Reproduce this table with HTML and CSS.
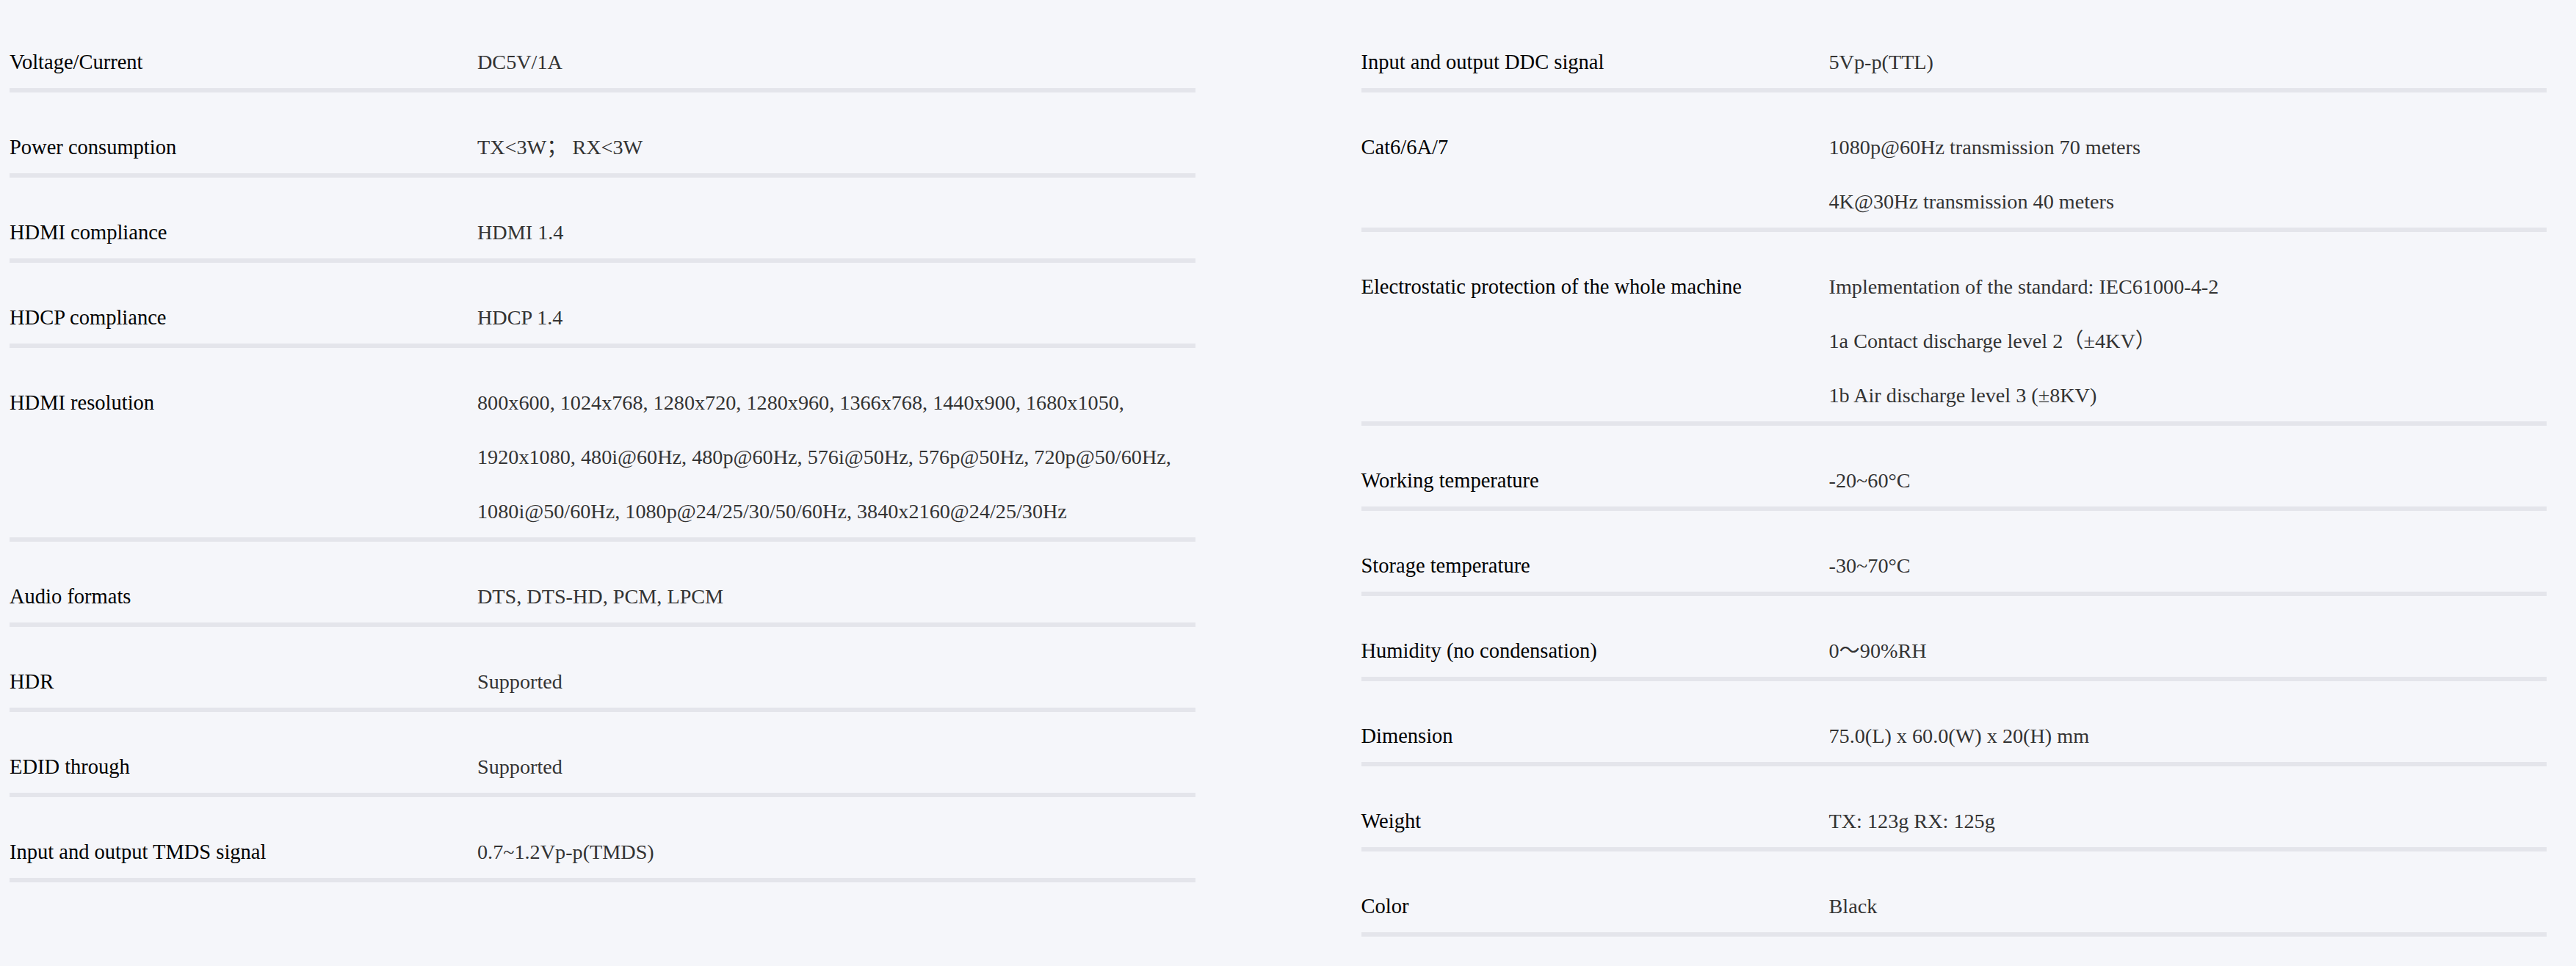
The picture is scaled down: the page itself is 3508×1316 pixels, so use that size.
FILE: index.html
```html
<!DOCTYPE html>
<html lang="en">
<head>
<meta charset="utf-8">
<title>Specifications</title>
<link rel="stylesheet" href="styles.css">
</head>
<body>
<main class="specs">
  <section class="col">
    <div class="row"><div class="label">Voltage/Current</div><div class="value"><p>DC5V/1A</p></div></div>
    <div class="row"><div class="label">Power consumption</div><div class="value"><p>TX&lt;3W；&nbsp;RX&lt;3W</p></div></div>
    <div class="row"><div class="label">HDMI compliance</div><div class="value"><p>HDMI 1.4</p></div></div>
    <div class="row"><div class="label">HDCP compliance</div><div class="value"><p>HDCP 1.4</p></div></div>
    <div class="row"><div class="label">HDMI resolution</div><div class="value">
      <p>800x600, 1024x768, 1280x720, 1280x960, 1366x768, 1440x900, 1680x1050,</p>
      <p>1920x1080, 480i@60Hz, 480p@60Hz, 576i@50Hz, 576p@50Hz, 720p@50/60Hz,</p>
      <p>1080i@50/60Hz, 1080p@24/25/30/50/60Hz, 3840x2160@24/25/30Hz</p>
    </div></div>
    <div class="row"><div class="label">Audio formats</div><div class="value"><p>DTS, DTS-HD, PCM, LPCM</p></div></div>
    <div class="row"><div class="label">HDR</div><div class="value"><p>Supported</p></div></div>
    <div class="row"><div class="label">EDID through</div><div class="value"><p>Supported</p></div></div>
    <div class="row"><div class="label">Input and output TMDS signal</div><div class="value"><p>0.7~1.2Vp-p(TMDS)</p></div></div>
  </section>
  <section class="col">
    <div class="row"><div class="label">Input and output DDC signal</div><div class="value"><p>5Vp-p(TTL)</p></div></div>
    <div class="row"><div class="label">Cat6/6A/7</div><div class="value">
      <p>1080p@60Hz transmission 70 meters</p>
      <p>4K@30Hz transmission 40 meters</p>
    </div></div>
    <div class="row"><div class="label">Electrostatic protection of the whole machine</div><div class="value">
      <p>Implementation of the standard: IEC61000-4-2</p>
      <p>1a Contact discharge level 2（±4KV）</p>
      <p>1b Air discharge level 3 (±8KV)</p>
    </div></div>
    <div class="row"><div class="label">Working temperature</div><div class="value"><p>-20~60°C</p></div></div>
    <div class="row"><div class="label">Storage temperature</div><div class="value"><p>-30~70°C</p></div></div>
    <div class="row"><div class="label">Humidity (no condensation)</div><div class="value"><p>0～90%RH</p></div></div>
    <div class="row"><div class="label">Dimension</div><div class="value"><p>75.0(L) x 60.0(W) x 20(H) mm</p></div></div>
    <div class="row"><div class="label">Weight</div><div class="value"><p>TX: 123g RX: 125g</p></div></div>
    <div class="row"><div class="label">Color</div><div class="value"><p>Black</p></div></div>
  </section>
</main>
</body>
</html>
```

FILE: styles.css
```css
html, body {
  margin: 0;
  padding: 0;
  background: #f5f6fa;
}

body {
  font-family: "Liberation Serif", "Noto Sans CJK SC", serif;
  font-size: 28px;
  color: #000;
}

.specs {
  display: grid;
  grid-template-columns: 1fr 1fr;
  column-gap: 226px;
  padding: 10px 40px 0 13px;
  align-items: start;
}

.col {
  display: flex;
  flex-direction: column;
}

.row {
  display: grid;
  grid-template-columns: 637px 1fr;
  padding: 54px 0 14px;
  border-bottom: 6px solid #e4e5eb;
  line-height: 42px;
}

.label {
  color: #000;
  font-size: 28.5px;
  white-space: nowrap;
}

.value {
  display: flex;
  flex-direction: column;
  gap: 32px;
  color: #333;
  font-size: 28.2px;
}

.value p {
  margin: 0;
  white-space: nowrap;
}
```
